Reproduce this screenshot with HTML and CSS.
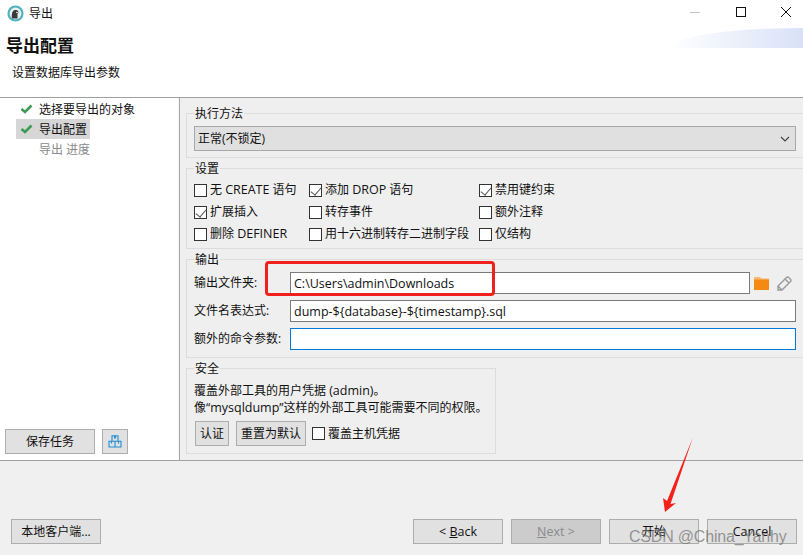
FILE: index.html
```html
<!DOCTYPE html>
<html lang="zh">
<head>
<meta charset="utf-8">
<title>导出</title>
<link rel="stylesheet" href="styles.css">
</head>
<body>
<div class="window">
  <header class="titlebar">
    <svg class="app-icon" width="17" height="17" viewBox="0 0 17 17"><circle cx="8.500" cy="8.500" r="7" fill="#e8f0f0" stroke="#4fb3bf" stroke-width="2.200"/><path d="M5 13.500c-.5-4 0-8 3-8.500 2.500-.5 3.500 1 3.500 2.500l-1 1.500v4.500z" fill="#3a3a3a"/><circle cx="10" cy="7.500" r=".8" fill="#fff"/></svg>
    <span class="title-text">导出</span>
    <div class="win-controls">
      <svg width="12" height="12" viewBox="0 0 12 12"><path d="M1 6.500h10" stroke="#c4c4c4" fill="none"/></svg>
      <svg width="12" height="12" viewBox="0 0 12 12"><rect x="1.500" y="1.500" width="9" height="9" fill="none" stroke="#111"/></svg>
      <svg width="12" height="12" viewBox="0 0 12 12"><path d="M1 1l10 10M11 1L1 11" fill="none" stroke="#111"/></svg>
    </div>
  </header>
  <section class="banner">
    <div class="banner-art"></div>
    <h1 class="banner-title">导出配置</h1>
    <p class="banner-sub">设置数据库导出参数</p>
  </section>
  <main class="content">
    <aside class="sidebar">
      <ul class="steps">
        <li class="step"><svg class="check" width="13" height="10" viewBox="0 0 13 10"><path d="M1.500 5l3.500 3 6.500-6.500" fill="none" stroke="#3f9a54" stroke-width="2.600"/></svg><span>选择要导出的对象</span></li>
        <li class="step current"><svg class="check" width="13" height="10" viewBox="0 0 13 10"><path d="M1.500 5l3.500 3 6.500-6.500" fill="none" stroke="#3f9a54" stroke-width="2.600"/></svg><span>导出配置</span></li>
        <li class="step pending"><span>导出 进度</span></li>
      </ul>
      <div class="side-actions">
        <button class="btn btn-save">保存任务</button>
        <button class="btn btn-icon"><svg width="14" height="13" viewBox="0 0 14 13"><path d="M4 .8h6v5.400H4zM1 6.200h6v5.800H1zM7 6.200h6v5.800H7zM6.500 .8v2.200h1V.8M3.500 6.200v2.200M10.500 6.200v2.200" fill="none" stroke="#1e8fd8" stroke-width="1.100"/></svg></button>
      </div>
    </aside>
    <div class="sash"></div>
    <div class="panel">
      <fieldset class="group group-method">
        <legend>执行方法</legend>
        <div class="select"><span>正常(不锁定)</span><svg width="10" height="6" viewBox="0 0 10 6"><path d="M1 1l4 4 4-4" fill="none" stroke="#444" stroke-width="1.200"/></svg></div>
      </fieldset>
      <fieldset class="group group-settings">
        <legend>设置</legend>
        <div class="check-grid">
          <label class="cb"><i class="box"></i><span>无 <span class="en">CREATE</span> 语句</span></label>
          <label class="cb"><i class="box on"></i><span>添加 <span class="en">DROP</span> 语句</span></label>
          <label class="cb"><i class="box on"></i>禁用键约束</label>
          <label class="cb"><i class="box on"></i>扩展插入</label>
          <label class="cb"><i class="box"></i>转存事件</label>
          <label class="cb"><i class="box"></i>额外注释</label>
          <label class="cb"><i class="box"></i><span>删除 <span class="en">DEFINER</span></span></label>
          <label class="cb"><i class="box"></i>用十六进制转存二进制字段</label>
          <label class="cb"><i class="box"></i>仅结构</label>
        </div>
      </fieldset>
      <fieldset class="group group-output">
        <legend>输出</legend>
        <div class="form-row">
          <span class="form-label">输出文件夹:</span>
          <div class="field field-short">C:\Users\admin\Downloads</div>
          <svg class="folder" width="15" height="13" viewBox="0 0 15 13"><path d="M0 0h6l1.500 1.500H15V13H0z" fill="#f9b873"/><path d="M0 2.500h15V13H0z" fill="#f58a12"/></svg>
          <svg class="pencil" width="15" height="15" viewBox="0 0 15 15"><path d="M1 14v-4l8.500-8.500a1.500 1.500 0 0 1 2.200 0l1.800 1.800a1.500 1.500 0 0 1 0 2.200L5 14zM1 10l4 4M8 3l4 4" fill="none" stroke="#999" stroke-width="1.400"/></svg>
        </div>
        <div class="form-row">
          <span class="form-label">文件名表达式:</span>
          <div class="field">dump-${database}-${timestamp}.sql</div>
        </div>
        <div class="form-row">
          <span class="form-label">额外的命令参数:</span>
          <div class="field focused"></div>
        </div>
      </fieldset>
      <fieldset class="group group-security">
        <legend>安全</legend>
        <p class="sec-text">覆盖外部工具的用户凭据 <span class="en">(admin)</span>。<br>像“<span class="en">mysqldump</span>”这样的外部工具可能需要不同的权限。</p>
        <div class="sec-actions">
          <button class="btn btn-small">认证</button>
          <button class="btn btn-small">重置为默认</button>
          <label class="cb"><i class="box"></i>覆盖主机凭据</label>
        </div>
      </fieldset>
    </div>
  </main>
  <footer class="footer">
    <button class="btn">本地客户端...</button>
    <div class="wizard">
      <button class="btn en">&lt; <u>B</u>ack</button>
      <button class="btn disabled en"><u>N</u>ext &gt;</button>
      <button class="btn">开始</button>
      <button class="btn en">Cancel</button>
    </div>
  </footer>
  <div class="red-box"></div>
  <svg class="red-arrow" width="34" height="77" viewBox="0 0 34 77"><path d="M31.700 1L9.500 67 15 66 4 75 2 61 6 64z" fill="#f5201a"/></svg>
  <div class="watermark">CSDN @China_Yanhy</div>
</div>
</body>
</html>
```
FILE: styles.css
```css
* { box-sizing: border-box; }
html, body { margin: 0; padding: 0; }
body {
  width: 803px;
  height: 555px;
  overflow: hidden;
  font: 12px/16px "Open Sans", "Noto Sans CJK SC", sans-serif;
  color: #111;
  background: #f0f0f0;
}
.en { font-size: 12.500px; }
.window { position: relative; width: 803px; height: 555px; display: flex; flex-direction: column; overflow: hidden; }
.titlebar { height: 26px; background: #fff; display: flex; align-items: center; padding-left: 7px; flex: none; }
.title-text { margin: 1px 0 0 5px; }
.win-controls { margin: 0 0 2px auto; display: flex; gap: 33.500px; padding-right: 11px; align-items: center; }
.banner { position: relative; height: 72px; background: #fff; border-bottom: 1px solid #a0a0a0; flex: none; padding-left: 6px; }
.banner-art {
  position: absolute; right: 0; top: 2px; width: 133px; height: 20px;
  background: linear-gradient(90deg, #ffffff, #d8e1f7);
  border-top-left-radius: 100% 100%;
}
.banner-title { margin: 0; padding-top: 10px; font-size: 17px; line-height: 20px; font-weight: 700; }
.banner-sub { margin: 9px 0 0 6px; line-height: 16px; }
.content { flex: none; height: 363px; display: flex; border-bottom: 1px solid #a0a0a0; }
.sidebar { width: 178px; background: #fff; display: flex; flex-direction: column; flex: none; }
.steps { list-style: none; margin: 0; padding: 1px 0 0 16px; }
.step { height: 20px; display: flex; align-items: center; padding: 2px 3px 0 23px; position: relative; width: max-content; }
.step .check { position: absolute; left: 4px; top: 5px; }
.current { background: #d6d6d6; }
.pending { color: #8a8a8a; }
.side-actions { margin-top: auto; display: flex; gap: 7px; padding: 0 0 6px 5px; }
.sash { width: 2px; background: #f6f6f6; border-right: 1px solid #a8a8a8; flex: none; }
.panel { flex: 1; background: #efefef; padding: 7px 0 0 6px; min-width: 0; }
.btn {
  font: inherit; color: #111; height: 25px; width: 90px; padding: 0;
  background: #e1e1e1; border: 1px solid #adadad; display: block;
}
.btn.en { font-size: 12.500px; }
.btn-icon { width: 26px; display: flex; align-items: center; justify-content: center; }
.btn-small { width: auto; padding: 0 4px; }
.disabled { background: #cccccc; color: #8a8a8a; }
.group { margin: 0 -10px 2px 0; padding: 0 0 0 7px; border: 1px solid #dcdcdc; min-width: 0; }
.group legend { padding: 0 1px; margin-left: 0; height: 16px; line-height: 18px; }
.group-method { height: 53px; padding-top: 5px; }
.select {
  width: 602px; height: 25px; background: #e0e0e0; border: 1px solid #a8a8a8;
  display: flex; align-items: center; justify-content: space-between; padding: 0 5px 0 3px;
}
.group-settings { height: 89px; padding-top: 3px; }
.check-grid { display: grid; grid-template-columns: 115px 170px auto; grid-auto-rows: 22px; }
.cb { display: flex; align-items: center; white-space: nowrap; line-height: 16px; }
.box { width: 13px; height: 13px; background: #fff; border: 1px solid #333; margin-right: 3px; flex: none; position: relative; }
.box.on::after {
  content: ""; position: absolute; left: 3px; top: 0px; width: 5px; height: 9px;
  border: solid #555; border-width: 0 1px 1px 0; transform: rotate(40deg);
}
.group-output { height: 107px; padding-top: 5px; }
.form-row { display: flex; align-items: center; height: 22px; margin-bottom: 6px; }
.form-label { width: 96px; flex: none; white-space: nowrap; line-height: 18px; }
.field { width: 506px; height: 22px; background: #fff; border: 1px solid #7a7a7a; padding: 0 3px; line-height: 22px; flex: none; font-size: 12.500px; }
.field-short { width: 460px; }
.focused { border-color: #0078d7; }
.folder { margin-left: 4px; flex: none; }
.pencil { margin-left: 8px; flex: none; }
.group-security { width: 310px; height: 94px; padding-top: 6px; margin: 0; }
.sec-text { margin: 0; line-height: 17px; white-space: nowrap; }
.sec-actions { display: flex; align-items: center; gap: 7px; margin-top: 5px; padding-left: 1px; }
.sec-actions .cb { margin-left: -1px; }
.footer { flex: 1; display: flex; align-items: flex-end; justify-content: space-between; padding: 0 6px 11px 11px; background: #f0f0f0; }
.wizard { display: flex; gap: 8px; }
.red-box { position: absolute; left: 265px; top: 261px; width: 230px; height: 35px; border: 3px solid #f0201c; border-radius: 4px; }
.red-arrow { position: absolute; left: 661px; top: 437px; }
.watermark {
  position: absolute; left: 629px; top: 527px; font-family: "Liberation Sans", sans-serif;
  font-size: 16px; line-height: 20px; letter-spacing: -.2px; color: rgba(110,110,110,.7); white-space: nowrap;
}
```
